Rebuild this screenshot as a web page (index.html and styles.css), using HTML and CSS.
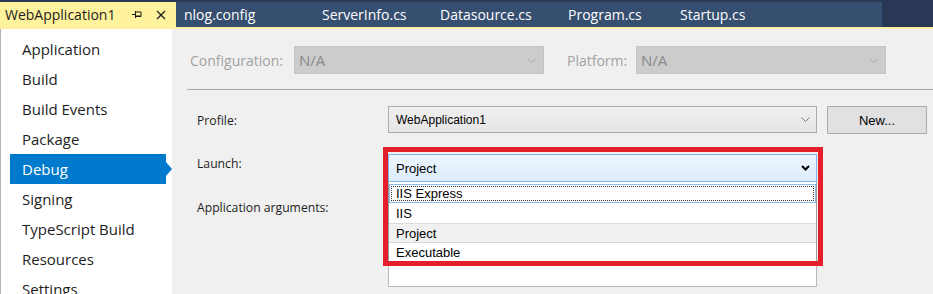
FILE: index.html
```html
<!DOCTYPE html>
<html lang="en">
<head>
    <meta charset="UTF-8">
    <title>WebApplication1 - Debug</title>
    <link rel="stylesheet" href="styles.css">
</head>
<body>
<div class="tabs">
    <div class="tab tab-active">
        <span>WebApplication1</span>
        <span class="tab-icons">
            <svg width="10" height="9" viewBox="0 0 10 9"><path d="M0 4.5H3.5M3.5 1V8M3.5 2H9V6.5H3.5M3.5 6H9" fill="none" stroke="#1E1E1E"/></svg>
            <svg width="10" height="10" viewBox="0 0 10 10"><path d="M1 1L9 9M9 1L1 9" fill="none" stroke="#1E1E1E" stroke-width="1.3"/></svg>
        </span>
    </div>
    <div class="tab tab-nlog">nlog.config</div>
    <div class="tab tab-server">ServerInfo.cs</div>
    <div class="tab tab-data">Datasource.cs</div>
    <div class="tab tab-program">Program.cs</div>
    <div class="tab tab-startup">Startup.cs</div>
</div>

<div class="page">
    <nav class="side">
        <div class="side-item">Application</div>
        <div class="side-item">Build</div>
        <div class="side-item">Build Events</div>
        <div class="side-item">Package</div>
        <div class="side-item is-active">Debug</div>
        <div class="side-item">Signing</div>
        <div class="side-item">TypeScript Build</div>
        <div class="side-item">Resources</div>
        <div class="side-item">Settings</div>
    </nav>

    <div class="main">
        <div class="config-bar">
            <span class="config-label label-config">Configuration:</span>
            <div class="select-disabled">
                <span>N/A</span>
                <svg width="9" height="5" viewBox="0 0 9 5"><path d="M0.5 0.5L4.5 4.5L8.5 0.5" fill="none" stroke="#A8A8A8"/></svg>
            </div>
            <span class="config-label label-platform">Platform:</span>
            <div class="select-disabled">
                <span>N/A</span>
                <svg width="9" height="5" viewBox="0 0 9 5"><path d="M0.5 0.5L4.5 4.5L8.5 0.5" fill="none" stroke="#A8A8A8"/></svg>
            </div>
        </div>
        <div class="divider"></div>

        <div class="field field-profile">
            <span class="field-label label-mid">Profile:</span>
            <div class="select">
                <span>WebApplication1</span>
                <svg width="9" height="5" viewBox="0 0 9 5"><path d="M0.5 0.5L4.5 4.5L8.5 0.5" fill="none" stroke="#7A7A7A"/></svg>
            </div>
            <button class="btn">New...</button>
        </div>

        <div class="field field-launch">
            <span class="field-label">Launch:</span>
            <div class="dropdown">
                <div class="select-open">
                    <span>Project</span>
                    <svg width="9" height="6" viewBox="0 0 9 6"><path d="M1 1L4.5 4.5L8 1" fill="none" stroke="#000" stroke-width="2"/></svg>
                </div>
                <ul class="dropdown-list">
                    <li class="option option-hover">IIS Express</li>
                    <li class="option option-tall">IIS</li>
                    <li class="option option-current">Project</li>
                    <li class="option">Executable</li>
                </ul>
                <div class="annotation"></div>
            </div>
        </div>

        <div class="field field-args">
            <span class="field-label">Application arguments:</span>
            <div class="textbox"></div>
        </div>
    </div>
</div>
</body>
</html>
```

FILE: styles.css
```css
body {
    margin: 0;
    width: 933px;
    height: 294px;
    overflow: hidden;
    font-family: "Open Sans", sans-serif;
    background-color: #f0f0f0;
}

/* document tabs */
.tabs {
    display: flex;
    height: 25px;
    padding-top: 2px;
    background-color: #293955;
    border-bottom: 2px solid #fbefa4;
}

.tab {
    display: flex;
    align-items: center;
    box-sizing: border-box;
    padding-left: 8px;
    color: #ffffff;
    font-size: 14px;
    background-color: #364e6f;
}

.tab-active {
    width: 176px;
    padding-left: 5px;
    color: #1e1e1e;
    background-color: #fff29d;
}

.tab-icons {
    display: flex;
    align-items: center;
    gap: 14px;
    margin-left: auto;
    padding-right: 10px;
}

.tab-nlog { width: 138px; }
.tab-server { width: 118px; }
.tab-data { width: 128px; }
.tab-program { width: 112px; }
.tab-startup { width: 210px; }

.page {
    display: flex;
    height: 265px;
}

/* left navigation */
.side {
    width: 172px;
    box-sizing: border-box;
    padding-top: 5px;
    background-color: #ffffff;
    border-left: 1px solid #b4b4b4;
}

.side-item {
    position: relative;
    width: 156px;
    height: 30px;
    box-sizing: border-box;
    margin-left: 9px;
    padding-left: 12px;
    line-height: 30px;
    font-size: 15px;
    color: #1e1e1e;
}

.side-item.is-active {
    background-color: #007acc;
    color: #ffffff;
}

.side-item.is-active::after {
    content: "";
    position: absolute;
    right: -6px;
    top: 8px;
    border-left: 6px solid #007acc;
    border-top: 7px solid transparent;
    border-bottom: 7px solid transparent;
}

/* property page */
.main {
    flex: 1;
}

.config-bar {
    display: flex;
    align-items: center;
    padding: 17px 0 0 18px;
}

.config-label {
    font-size: 14px;
    color: #a2a2a2;
}

.label-config { width: 104px; }

.label-platform {
    width: 69px;
    margin-left: 23px;
}

.select-disabled {
    display: flex;
    align-items: center;
    justify-content: space-between;
    width: 250px;
    height: 28px;
    box-sizing: border-box;
    padding: 0 7px 0 4px;
    background-color: #cccccc;
    border: 1px solid #c4c4c4;
    color: #8a8a8a;
    font-size: 15px;
}

.divider {
    margin: 15px 0 0 15px;
    border-top: 1px solid #a8a8a8;
}

.field {
    display: flex;
    padding-left: 25px;
}

.field-profile { margin-top: 16px; }
.field-launch { margin-top: 20px; }
.field-args { margin-top: 16px; }

.field-label {
    width: 191px;
    padding-top: 1px;
    font-size: 12.2px;
    color: #1e1e1e;
}

.label-mid {
    align-self: center;
    padding-top: 0;
}

.select, .select-open {
    display: flex;
    align-items: center;
    justify-content: space-between;
    width: 429px;
    box-sizing: border-box;
    padding: 0 6px 0 7px;
    font-family: "Liberation Sans", Arial, sans-serif;
    color: #000000;
}

.select {
    height: 27px;
    font-size: 12px;
    background: linear-gradient(#f0f0f0, #e5e5e5);
    border: 1px solid #acacac;
}

.btn {
    width: 100px;
    height: 28px;
    margin-left: 10px;
    background-color: #e1e1e1;
    border: 1px solid #adadad;
    font-family: "Liberation Sans", Arial, sans-serif;
    font-size: 13px;
    color: #000000;
}

.dropdown {
    position: relative;
    width: 429px;
    height: 28px;
}

.select-open {
    height: 28px;
    font-size: 13px;
    background: linear-gradient(#edf5fc, #dcecfc);
    border: 1px solid #7eb4ea;
}

.dropdown-list {
    position: absolute;
    top: 28px;
    left: 0;
    z-index: 2;
    width: 429px;
    box-sizing: border-box;
    margin: 0;
    padding: 2px 0 0 0;
    list-style: none;
    background-color: #ffffff;
    border: 1px solid #9a9a9a;
    border-top: none;
}

.option {
    height: 19px;
    box-sizing: border-box;
    padding-left: 7px;
    line-height: 20px;
    font-family: "Liberation Sans", Arial, sans-serif;
    font-size: 13px;
    color: #000000;
}

.option-tall {
    height: 20px;
    line-height: 21px;
}

.option-hover {
    border: 1px solid #8fbde6;
    padding-left: 6px;
    line-height: 18px;
    outline: 1px dotted #333333;
    outline-offset: -3px;
}

.option-current {
    height: 20px;
    background-color: #f0f0f0;
    border-top: 1px solid #d9d9d9;
    border-bottom: 1px solid #d9d9d9;
    line-height: 19px;
}

.annotation {
    position: absolute;
    left: -5px;
    top: -7px;
    z-index: 3;
    width: 440px;
    height: 119px;
    box-sizing: border-box;
    border: 5px solid #e41e2b;
}

.textbox {
    width: 429px;
    height: 89px;
    box-sizing: border-box;
    background-color: #ffffff;
    border: 1px solid #b8b8b8;
}
```
